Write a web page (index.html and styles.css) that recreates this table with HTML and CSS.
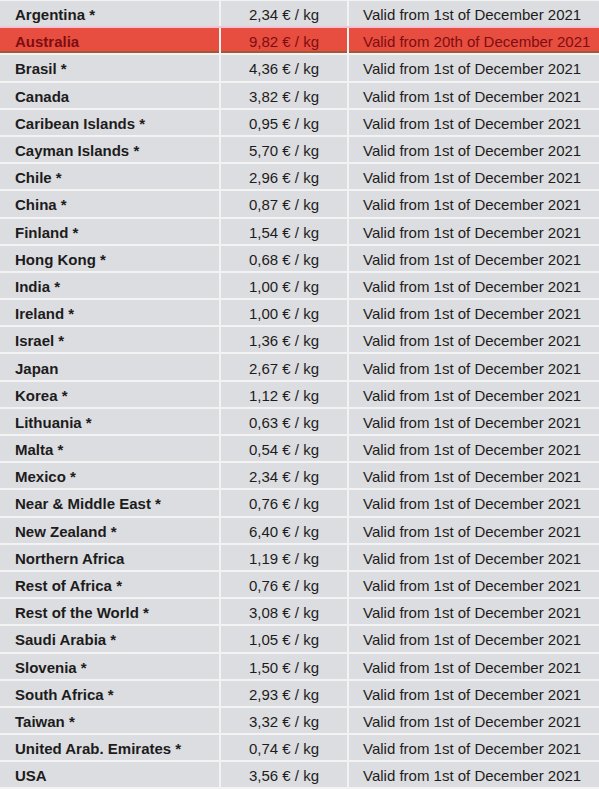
FILE: index.html
```html
<!DOCTYPE html>
<html lang="en">
<head>
<meta charset="utf-8">
<title>Rates</title>
<link rel="stylesheet" href="styles.css">
</head>
<body>
<div class="table">
  <div class="row"><div class="c country">Argentina *</div><div class="c price">2,34 € / kg</div><div class="c valid">Valid from 1st of December 2021</div></div>
  <div class="row hot"><div class="c country">Australia</div><div class="c price">9,82 € / kg</div><div class="c valid">Valid from 20th of December 2021</div></div>
  <div class="row"><div class="c country">Brasil *</div><div class="c price">4,36 € / kg</div><div class="c valid">Valid from 1st of December 2021</div></div>
  <div class="row"><div class="c country">Canada</div><div class="c price">3,82 € / kg</div><div class="c valid">Valid from 1st of December 2021</div></div>
  <div class="row"><div class="c country">Caribean Islands *</div><div class="c price">0,95 € / kg</div><div class="c valid">Valid from 1st of December 2021</div></div>
  <div class="row"><div class="c country">Cayman Islands *</div><div class="c price">5,70 € / kg</div><div class="c valid">Valid from 1st of December 2021</div></div>
  <div class="row"><div class="c country">Chile *</div><div class="c price">2,96 € / kg</div><div class="c valid">Valid from 1st of December 2021</div></div>
  <div class="row"><div class="c country">China *</div><div class="c price">0,87 € / kg</div><div class="c valid">Valid from 1st of December 2021</div></div>
  <div class="row"><div class="c country">Finland *</div><div class="c price">1,54 € / kg</div><div class="c valid">Valid from 1st of December 2021</div></div>
  <div class="row"><div class="c country">Hong Kong *</div><div class="c price">0,68 € / kg</div><div class="c valid">Valid from 1st of December 2021</div></div>
  <div class="row"><div class="c country">India *</div><div class="c price">1,00 € / kg</div><div class="c valid">Valid from 1st of December 2021</div></div>
  <div class="row"><div class="c country">Ireland *</div><div class="c price">1,00 € / kg</div><div class="c valid">Valid from 1st of December 2021</div></div>
  <div class="row"><div class="c country">Israel *</div><div class="c price">1,36 € / kg</div><div class="c valid">Valid from 1st of December 2021</div></div>
  <div class="row"><div class="c country">Japan</div><div class="c price">2,67 € / kg</div><div class="c valid">Valid from 1st of December 2021</div></div>
  <div class="row"><div class="c country">Korea *</div><div class="c price">1,12 € / kg</div><div class="c valid">Valid from 1st of December 2021</div></div>
  <div class="row"><div class="c country">Lithuania *</div><div class="c price">0,63 € / kg</div><div class="c valid">Valid from 1st of December 2021</div></div>
  <div class="row"><div class="c country">Malta *</div><div class="c price">0,54 € / kg</div><div class="c valid">Valid from 1st of December 2021</div></div>
  <div class="row"><div class="c country">Mexico *</div><div class="c price">2,34 € / kg</div><div class="c valid">Valid from 1st of December 2021</div></div>
  <div class="row"><div class="c country">Near &amp; Middle East *</div><div class="c price">0,76 € / kg</div><div class="c valid">Valid from 1st of December 2021</div></div>
  <div class="row"><div class="c country">New Zealand *</div><div class="c price">6,40 € / kg</div><div class="c valid">Valid from 1st of December 2021</div></div>
  <div class="row"><div class="c country">Northern Africa</div><div class="c price">1,19 € / kg</div><div class="c valid">Valid from 1st of December 2021</div></div>
  <div class="row"><div class="c country">Rest of Africa *</div><div class="c price">0,76 € / kg</div><div class="c valid">Valid from 1st of December 2021</div></div>
  <div class="row"><div class="c country">Rest of the World *</div><div class="c price">3,08 € / kg</div><div class="c valid">Valid from 1st of December 2021</div></div>
  <div class="row"><div class="c country">Saudi Arabia *</div><div class="c price">1,05 € / kg</div><div class="c valid">Valid from 1st of December 2021</div></div>
  <div class="row"><div class="c country">Slovenia *</div><div class="c price">1,50 € / kg</div><div class="c valid">Valid from 1st of December 2021</div></div>
  <div class="row"><div class="c country">South Africa *</div><div class="c price">2,93 € / kg</div><div class="c valid">Valid from 1st of December 2021</div></div>
  <div class="row"><div class="c country">Taiwan *</div><div class="c price">3,32 € / kg</div><div class="c valid">Valid from 1st of December 2021</div></div>
  <div class="row"><div class="c country">United Arab. Emirates *</div><div class="c price">0,74 € / kg</div><div class="c valid">Valid from 1st of December 2021</div></div>
  <div class="row"><div class="c country">USA</div><div class="c price">3,56 € / kg</div><div class="c valid">Valid from 1st of December 2021</div></div>
</div>
</body>
</html>
```
FILE: styles.css
```css
html, body {
  margin: 0;
  padding: 0;
  background: #f3f3f4;
}
.table {
  width: 599px;
  display: flex;
  flex-direction: column;
  gap: 2px;
  padding-top: 1px;
  font-family: "Liberation Sans", Arial, sans-serif;
  font-size: 15px;
  color: #1c1c1c;
}
.row {
  display: grid;
  grid-template-columns: 219px 126px 1fr;
  column-gap: 2px;
  height: 25.2px;
}
.c {
  background: #dcdde0;
  display: flex;
  align-items: center;
  padding-top: 2px;
  box-sizing: border-box;
  white-space: nowrap;
}
.country {
  font-weight: bold;
  padding-left: 15px;
}
.price {
  justify-content: center;
}
.valid {
  padding-left: 14px;
}
.row.hot .c {
  background: #e84e3f;
  color: #7d0d12;
  box-shadow: inset 0 -2px 0 #9c5a36;
}
.row.hot {
  box-shadow: 0 -2px 0 #f6c3d6;
}
```
